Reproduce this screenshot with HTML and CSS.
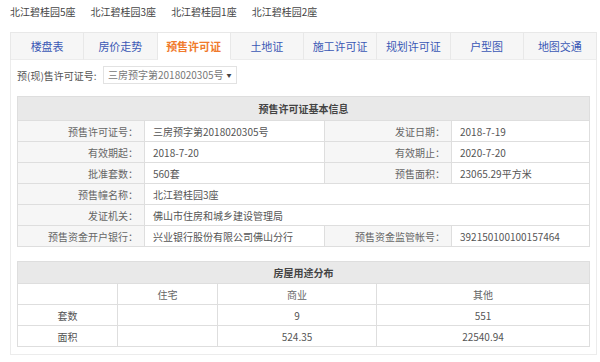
FILE: index.html
```html
<!DOCTYPE html>
<html lang="zh">

<head>
    <meta charset="UTF-8">
    <meta name="viewport" content="width=device-width, initial-scale=1.0">
    <title>预售许可证</title>
<link rel="stylesheet" href="styles.css">
</head>

<body>
    <!-- 楼栋切换 -->
    <div class="building-links">
        <a href="#">北江碧桂园5座</a>
        <a href="#">北江碧桂园3座</a>
        <a href="#">北江碧桂园1座</a>
        <a href="#">北江碧桂园2座</a>
    </div>

    <div class="wrap">
        <!-- 标签栏 -->
        <ul class="tabs">
            <li>楼盘表</li>
            <li>房价走势</li>
            <li class="active">预售许可证</li>
            <li>土地证</li>
            <li>施工许可证</li>
            <li>规划许可证</li>
            <li>户型图</li>
            <li>地图交通</li>
        </ul>

        <div class="panel">
            <div class="permit-select">
                <span class="permit-label">预(现)售许可证号:</span>
                <div class="select-box">三房预字第2018020305号<span class="arrow">&#9660;</span></div>
            </div>

            <!-- 基本信息 -->
            <table class="info-table">
                <colgroup>
                    <col style="width:127px">
                    <col style="width:180px">
                    <col style="width:127px">
                    <col>
                </colgroup>
                <tr>
                    <th colspan="4">预售许可证基本信息</th>
                </tr>
                <tr>
                    <td class="label">预售许可证号：</td>
                    <td>三房预字第2018020305号</td>
                    <td class="label">发证日期：</td>
                    <td>2018-7-19</td>
                </tr>
                <tr>
                    <td class="label">有效期起：</td>
                    <td>2018-7-20</td>
                    <td class="label">有效期止：</td>
                    <td>2020-7-20</td>
                </tr>
                <tr>
                    <td class="label">批准套数：</td>
                    <td>560套</td>
                    <td class="label">预售面积：</td>
                    <td>23065.29平方米</td>
                </tr>
                <tr>
                    <td class="label">预售幢名称：</td>
                    <td colspan="3">北江碧桂园3座</td>
                </tr>
                <tr>
                    <td class="label">发证机关：</td>
                    <td colspan="3">佛山市住房和城乡建设管理局</td>
                </tr>
                <tr>
                    <td class="label">预售资金开户银行：</td>
                    <td>兴业银行股份有限公司佛山分行</td>
                    <td class="label">预售资金监管帐号：</td>
                    <td>392150100100157464</td>
                </tr>
            </table>

            <!-- 房屋用途分布 -->
            <table class="usage-table">
                <colgroup>
                    <col style="width:100px">
                    <col style="width:100px">
                    <col style="width:159px">
                    <col>
                </colgroup>
                <tr>
                    <th colspan="4">房屋用途分布</th>
                </tr>
                <tr class="sub-head">
                    <td></td>
                    <td>住宅</td>
                    <td>商业</td>
                    <td>其他</td>
                </tr>
                <tr>
                    <td>套数</td>
                    <td></td>
                    <td>9</td>
                    <td>551</td>
                </tr>
                <tr>
                    <td>面积</td>
                    <td></td>
                    <td>524.35</td>
                    <td>22540.94</td>
                </tr>
            </table>
        </div>
    </div>
</body>

</html>
```

FILE: styles.css
```css
* {
    margin: 0;
    padding: 0;
    box-sizing: border-box;
}

body {
    font-family: "Microsoft YaHei", "Noto Sans CJK SC", sans-serif;
    font-size: 10px;
    color: #444;
    background-color: #fff;
}

.building-links {
    display: flex;
    gap: 15px;
    height: 32px;
    padding: 4px 0 0 10px;
    line-height: 16px;
}

.building-links a {
    color: #444;
    text-decoration: none;
}

.wrap {
    width: 587px;
    margin-left: 10px;
}

.tabs {
    display: flex;
    list-style: none;
    border-top: 1px solid #e8e8e8;
    border-left: 1px solid #e8e8e8;
    background-color: #f6f6f6;
}

.tabs li {
    flex: 1;
    height: 27px;
    line-height: 26px;
    text-align: center;
    font-size: 11px;
    color: #3a58b5;
    border-right: 1px solid #e8e8e8;
    border-bottom: 1px solid #ececec;
}

.tabs li.active {
    background-color: #fff;
    color: #f07a2c;
    font-weight: bold;
    border-bottom-color: #fff;
}

.panel {
    border: 1px solid #ececec;
    border-top: none;
    padding: 6px 6px 7px 6px;
}

.permit-select {
    display: flex;
    align-items: center;
    height: 18px;
    margin-bottom: 12px;
}

.permit-label {
    width: 86px;
    color: #555;
}

.select-box {
    height: 18px;
    line-height: 16px;
    border: 1px solid #e2e2e2;
    padding: 0 4px 0 4px;
    color: #777;
    white-space: nowrap;
}

.select-box .arrow {
    display: inline-block;
    margin-left: 3px;
    font-size: 5px;
    vertical-align: 2px;
    color: #444;
}

.info-table,
.usage-table {
    width: 573px;
    border-collapse: collapse;
    table-layout: fixed;
}

.info-table th,
.usage-table th {
    height: 24px;
    background-color: #e9e9e9;
    border: 1px solid #dedede;
    font-size: 10px;
    color: #444;
}

.info-table td,
.usage-table td {
    height: 21px;
    border: 1px solid #dedede;
    color: #555;
    white-space: nowrap;
}

.info-table td {
    padding: 0 8px;
}

.info-table td.label {
    background-color: #f6f6f6;
    text-align: right;
    color: #666;
    padding-right: 6px;
}

.usage-table {
    margin-top: 14px;
}

.usage-table th {
    height: 22px;
}

.usage-table td {
    text-align: center;
}

.usage-table .sub-head td {
    color: #666;
}
```
